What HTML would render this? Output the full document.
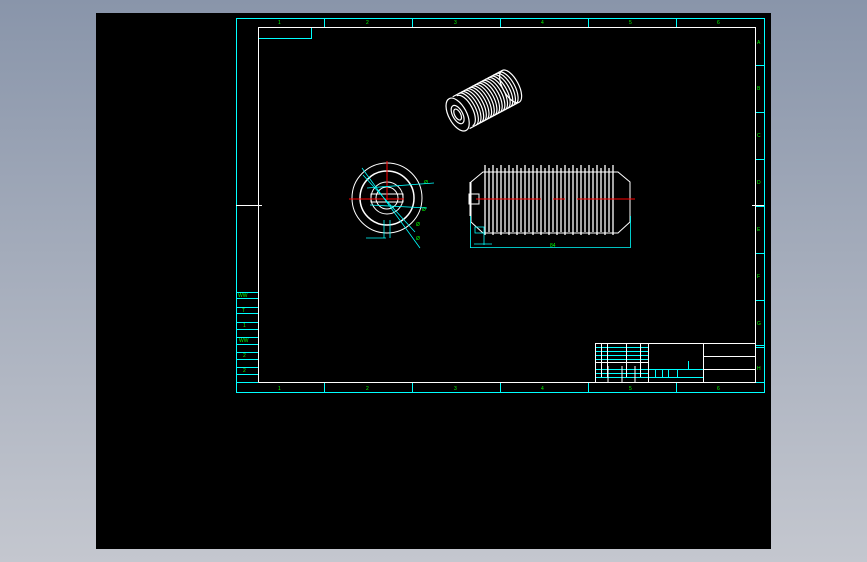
<!DOCTYPE html>
<html><head><meta charset="utf-8"><style>
html,body{margin:0;padding:0;width:867px;height:562px;overflow:hidden;background:linear-gradient(#8995aa,#c4c7cf);}
svg{position:absolute;left:0;top:0}
</style></head><body>
<svg width="867" height="562" viewBox="0 0 867 562" font-family="Liberation Sans, sans-serif">
<rect x="96" y="13" width="675" height="536" fill="#000"/>
<g fill="none" stroke="#0ff" stroke-width="1">
<rect x="236.5" y="18.5" width="528" height="374"/>
<path d="M324.5 18v9M412.5 18v9M500.5 18v9M588.5 18v9M676.5 18v9M324.5 383v9M412.5 383v9M500.5 383v9M588.5 383v9M676.5 383v9"/>
<path d="M756 65.5h8M756 112.5h8M756 159.5h8M756 206.5h8M756 253.5h8M756 300.5h8M756 347.5h8"/>
<path d="M259 38.5h52.5V28"/>
<path d="M237 292.5h21M237 298.5h21M237 307.5h21M237 313.5h21M237 322.5h21M237 329.5h21M237 337.5h21M237 344.5h21M237 352.5h21M237 359.5h21M237 367.5h21M237 374.5h21"/>
<path d="M596 347.5h52M596 351.5h52M596 355.5h52M596 359.5h52M596 369.5h52M596 373.5h52M596 377.5h52M648 369.5h55M648 377.5h55"/>
<path d="M655.5 369v8M662.5 369v8M668.5 369v8M677.5 369v8M688.5 369v-8"/>
<line x1="755" y1="345.5" x2="764" y2="345.5"/>
<line x1="237" y1="382.5" x2="764" y2="382.5"/>
</g>
<g fill="none" stroke="#fff" stroke-width="1">
<path d="M258.5 382.5V27.5H755.5V382.5H258.5"/>
<path d="M595.5 382V343.5H755.5"/>
<path d="M703.5 343v39M703 356.5h52M703 369.5h52M648.5 343v39M601.5 343v34M607.5 343v34M626.5 343v34M640.5 343v34M596 362.5h52M608 366v16M622 366v16M635 366v16"/>
<line x1="236" y1="205.5" x2="262" y2="205.5"/>
<line x1="752" y1="205.5" x2="764" y2="205.5"/>
</g>
<g fill="#0f0" font-size="5">
<text x="278" y="24">1</text><text x="366" y="24">2</text><text x="454" y="24">3</text><text x="541" y="24">4</text><text x="629" y="24">5</text><text x="717" y="24">6</text>
<text x="278" y="390">1</text><text x="366" y="390">2</text><text x="454" y="390">3</text><text x="541" y="390">4</text><text x="629" y="390">5</text><text x="717" y="390">6</text>
<text x="757" y="44">A</text><text x="757" y="90">B</text><text x="757" y="137">C</text><text x="757" y="184">D</text><text x="757" y="231">E</text><text x="757" y="278">F</text><text x="757" y="325">G</text><text x="757" y="370">H</text>
<text x="238" y="297">WW</text><text x="242" y="312">T</text><text x="243" y="327">1</text><text x="239" y="342">WW</text><text x="243" y="357">2</text><text x="243" y="372">2</text>
<text x="550" y="247">84</text><text x="424" y="184">Ø</text><text x="422" y="211">Ø</text><text x="416" y="226">Ø</text><text x="416" y="240">Ø</text>
</g>
<g fill="none" stroke="#fff" stroke-width="1.2">
<g transform="rotate(-28 485 100)">
<ellipse cx="454" cy="100" rx="9" ry="18"/>
<ellipse cx="454" cy="100" rx="5" ry="10"/>
<ellipse cx="454" cy="100" rx="3" ry="6"/>
<path d="M458 82h56M458 118h56"/>
<ellipse cx="514" cy="100" rx="8" ry="18"/>
<path d="M462 83a8 17 0 0 1 0 34M465 82a8 18 0 0 1 0 36M468 82a8 18 0 0 1 0 36M471 82a8 18 0 0 1 0 36M474 82a8 18 0 0 1 0 36M477 82a8 18 0 0 1 0 36M480 82a8 18 0 0 1 0 36M483 82a8 18 0 0 1 0 36M486 82a8 18 0 0 1 0 36M489 82a8 18 0 0 1 0 36M492 82a8 18 0 0 1 0 36M495 82a8 18 0 0 1 0 36M498 82a8 18 0 0 1 0 36M501 82a8 18 0 0 1 0 36M504 82a8 18 0 0 1 0 36M507 82a8 18 0 0 1 0 36M510 82a8 18 0 0 1 0 36"/>
</g>
</g>
<g fill="none" stroke="#fff" stroke-width="1">
<circle cx="387" cy="198" r="35"/>
<circle cx="387" cy="198" r="27" stroke-width="1.5"/>
<circle cx="387" cy="198" r="16"/>
<circle cx="387" cy="198" r="11"/>
<path d="M371 194h32v8h-32z"/>
</g>
<g stroke="#f00" stroke-width="1"><path d="M349 199h55M387 161v39"/></g>
<g stroke="#0ff" stroke-width="0.8" fill="none">
<path d="M362 168l58 80M363 175l52 57M367 188l67-5M370 205l57 3M366 238h20M384 220v18M390 220v18"/>
</g>
<g fill="none" stroke="#fff" stroke-width="1">
<path d="M483 172h135l12 10v40l-12 11H483l-12-11v-40z"/>
<path d="M470 182v34M630 182v34"/>
<path d="M469 194h10v10h-10z"/>
<g stroke-width="1.3">
<path d="M485 165v70M489 168v64M493 165v70M497 168v64M501 165v70M505 168v64M509 165v70M513 168v64M517 165v70M521 168v64M525 165v70M529 168v64M533 165v70M537 168v64M541 165v70M545 168v64M549 165v70M553 168v64M557 165v70M561 168v64M565 165v70M569 168v64M573 165v70M577 168v64M581 165v70M585 168v64M589 165v70M593 168v64M597 165v70M601 168v64M605 165v70M609 168v64M613 165v70"/>
</g>
</g>
<g stroke="#f00"><path d="M476 199h65M553 199h12M577 199h58"/></g>
<g stroke="#0ff" fill="none" stroke-width="0.8"><path d="M470.5 216v32M630.5 216v32M470 247.5h160M475 227h9v6h-9zM484 233v12M474 244h18"/></g>
</svg>
</body></html>
